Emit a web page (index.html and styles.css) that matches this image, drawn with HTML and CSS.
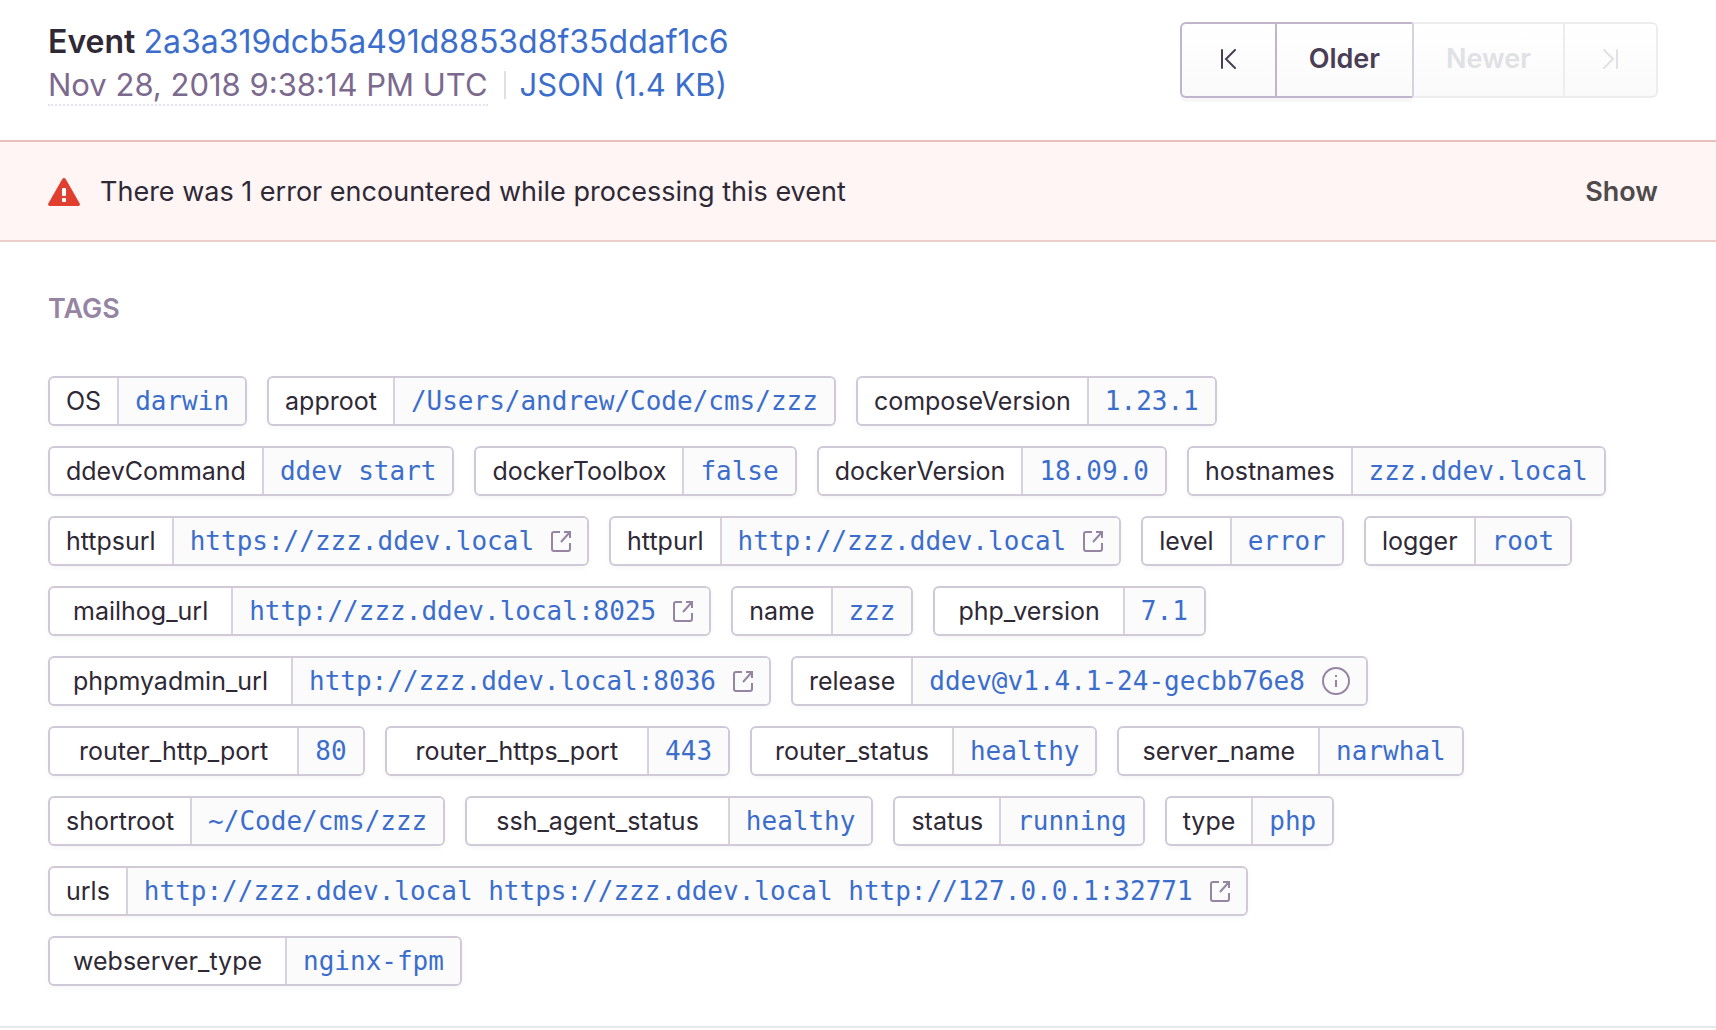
FILE: index.html
```html
<!DOCTYPE html>
<html lang="en">
<head>
<meta charset="utf-8">
<meta name="viewport" content="width=device-width, initial-scale=1">
<title>Event details</title>
<link rel="stylesheet" href="styles.css">
</head>
<body>
<svg class="sprite" aria-hidden="true">
  <symbol id="external" viewBox="0 0 20 22"><path d="M9 2H3a2 2 0 0 0-2 2v15a2 2 0 0 0 2 2h14a2 2 0 0 0 2-2v-6M13 2h6v6M19 2l-9 10" fill="none" stroke="currentColor" stroke-width="2"/></symbol>
  <symbol id="info" viewBox="0 0 28 28"><circle cx="14" cy="14" r="13" fill="none" stroke="currentColor" stroke-width="2"/><path d="M14 13v7M14 8v2" stroke="currentColor" stroke-width="2" fill="none"/></symbol>
</svg>

<header class="event-header">
  <div class="event-info">
    <h1 class="event-title">Event <a href="#event">2a3a319dcb5a491d8853d8f35ddaf1c6</a></h1>
    <div class="event-meta">
      <time class="event-date" datetime="2018-11-28T21:38:14Z">Nov 28, 2018 9:38:14 PM UTC</time>
      <a class="event-json" href="#json">JSON (1.4 KB)</a>
    </div>
  </div>
  <nav class="pager" aria-label="Event navigation">
    <button class="pager-button pager-button--edge" type="button" aria-label="Oldest"><svg width="16" height="20" viewBox="0 0 16 20"><path d="M2 1v18M15 1L6 10l9 9" /></svg></button>
    <button class="pager-button" type="button">Older</button>
    <button class="pager-button" type="button" disabled>Newer</button>
    <button class="pager-button pager-button--edge" type="button" aria-label="Newest" disabled><svg width="16" height="20" viewBox="0 0 16 20"><path d="M14 1v18M1 1l9 9-9 9" /></svg></button>
  </nav>
</header>

<section class="alert">
  <svg class="alert-icon" width="32" height="28" viewBox="0 0 32 28" aria-hidden="true"><path d="M14.300 1a2 2 0 0 1 3.400 0l14 24.500a1.700 1.700 0 0 1-1.500 2.500H1.800a1.700 1.700 0 0 1-1.500-2.500z" fill="#e03e2f"/><rect x="14" y="10" width="4" height="8" rx="1" fill="#fff"/><rect x="14" y="20" width="4" height="4" rx="1" fill="#fff"/></svg>
  <p class="alert-text">There was 1 error encountered while processing this event</p>
  <button class="alert-toggle" type="button">Show</button>
</section>

<main class="tags">
  <h2 class="tags-title">Tags</h2>
  <ul class="tag-list">
    <li class="tag"><span class="tag-key">OS</span><span class="tag-value"><a href="#os">darwin</a></span></li>
    <li class="tag"><span class="tag-key">approot</span><span class="tag-value"><a href="#approot">/Users/andrew/Code/cms/zzz</a></span></li>
    <li class="tag"><span class="tag-key">composeVersion</span><span class="tag-value"><a href="#composeVersion">1.23.1</a></span></li>
    <li class="tag"><span class="tag-key">ddevCommand</span><span class="tag-value"><a href="#ddevCommand">ddev start</a></span></li>
    <li class="tag"><span class="tag-key">dockerToolbox</span><span class="tag-value"><a href="#dockerToolbox">false</a></span></li>
    <li class="tag"><span class="tag-key">dockerVersion</span><span class="tag-value"><a href="#dockerVersion">18.09.0</a></span></li>
    <li class="tag"><span class="tag-key">hostnames</span><span class="tag-value"><a href="#hostnames">zzz.ddev.local</a></span></li>
    <li class="tag"><span class="tag-key">httpsurl</span><span class="tag-value"><a href="#httpsurl">https://zzz.ddev.local</a><a class="tag-icon" href="#open-httpsurl" aria-label="Open link"><svg width="20" height="22"><use href="#external"/></svg></a></span></li>
    <li class="tag"><span class="tag-key">httpurl</span><span class="tag-value"><a href="#httpurl">http://zzz.ddev.local</a><a class="tag-icon" href="#open-httpurl" aria-label="Open link"><svg width="20" height="22"><use href="#external"/></svg></a></span></li>
    <li class="tag"><span class="tag-key">level</span><span class="tag-value"><a href="#level">error</a></span></li>
    <li class="tag"><span class="tag-key">logger</span><span class="tag-value"><a href="#logger">root</a></span></li>
    <li class="tag"><span class="tag-key tag-key--snake">mailhog_url</span><span class="tag-value"><a href="#mailhog_url">http://zzz.ddev.local:8025</a><a class="tag-icon" href="#open-mailhog" aria-label="Open link"><svg width="20" height="22"><use href="#external"/></svg></a></span></li>
    <li class="tag"><span class="tag-key">name</span><span class="tag-value"><a href="#name">zzz</a></span></li>
    <li class="tag"><span class="tag-key tag-key--snake">php_version</span><span class="tag-value"><a href="#php_version">7.1</a></span></li>
    <li class="tag"><span class="tag-key tag-key--snake">phpmyadmin_url</span><span class="tag-value"><a href="#phpmyadmin_url">http://zzz.ddev.local:8036</a><a class="tag-icon" href="#open-phpmyadmin" aria-label="Open link"><svg width="20" height="22"><use href="#external"/></svg></a></span></li>
    <li class="tag"><span class="tag-key">release</span><span class="tag-value"><a href="#release">ddev@v1.4.1-24-gecbb76e8</a><a class="tag-icon" href="#release-info" aria-label="Release details"><svg width="28" height="28"><use href="#info"/></svg></a></span></li>
    <li class="tag"><span class="tag-key tag-key--long-snake">router_http_port</span><span class="tag-value"><a href="#router_http_port">80</a></span></li>
    <li class="tag"><span class="tag-key tag-key--long-snake">router_https_port</span><span class="tag-value"><a href="#router_https_port">443</a></span></li>
    <li class="tag"><span class="tag-key tag-key--snake">router_status</span><span class="tag-value"><a href="#router_status">healthy</a></span></li>
    <li class="tag"><span class="tag-key tag-key--snake">server_name</span><span class="tag-value"><a href="#server_name">narwhal</a></span></li>
    <li class="tag"><span class="tag-key">shortroot</span><span class="tag-value"><a href="#shortroot">~/Code/cms/zzz</a></span></li>
    <li class="tag"><span class="tag-key tag-key--long-snake">ssh_agent_status</span><span class="tag-value"><a href="#ssh_agent_status">healthy</a></span></li>
    <li class="tag"><span class="tag-key">status</span><span class="tag-value"><a href="#status">running</a></span></li>
    <li class="tag"><span class="tag-key">type</span><span class="tag-value"><a href="#type">php</a></span></li>
    <li class="tag"><span class="tag-key">urls</span><span class="tag-value"><a href="#urls">http://zzz.ddev.local https://zzz.ddev.local http://127.0.0.1:32771</a><a class="tag-icon" href="#open-urls" aria-label="Open link"><svg width="20" height="22"><use href="#external"/></svg></a></span></li>
    <li class="tag"><span class="tag-key tag-key--snake">webserver_type</span><span class="tag-value"><a href="#webserver_type">nginx-fpm</a></span></li>
  </ul>
</main>
</body>
</html>
```
FILE: styles.css
```css
* { box-sizing: border-box; }

body {
  margin: 0;
  background: #fff;
  color: #2f2936;
  font: 400 25px/30px Inter, "Liberation Sans", sans-serif;
}

a { color: #3b6ecc; text-decoration: none; }
button { font: inherit; cursor: pointer; }
button:disabled { cursor: default; }
svg { display: block; flex: none; }

.sprite { position: absolute; width: 0; height: 0; }

/* Header */
.event-header {
  display: flex;
  justify-content: space-between;
  align-items: flex-start;
  padding: 22px 58px 34px 48px;
}

.event-title {
  margin: 0 0 2px;
  font-size: 32px;
  line-height: 40px;
  font-weight: 600;
}
.event-title a { font-weight: 400; }

.event-meta {
  display: flex;
  align-items: center;
  gap: 16px;
  font-size: 31px;
  line-height: 38px;
}
.event-date {
  padding-top: 2px;
  color: #7c6a8e;
  border-bottom: 2px dotted #e2e5ed;
}
.event-json {
  display: flex;
  align-items: center;
  gap: 14px;
}
.event-json::before {
  content: "";
  width: 2px;
  height: 28px;
  background: #e2dee6;
}

.pager { display: flex; }
.pager-button {
  display: flex;
  align-items: center;
  justify-content: center;
  height: 76px;
  padding: 0 32px 2px;
  border: 2px solid #c0b5cc;
  border-right-width: 0;
  background: linear-gradient(#fff, #fafafa);
  box-shadow: 0 4px 0 rgba(0, 0, 0, .03);
  color: #493e54;
  font-size: 27px;
  font-weight: 600;
}
.pager-button:disabled {
  border-color: #ededee;
  box-shadow: none;
  color: #e0e1e4;
}
.pager-button--edge { width: 95px; padding: 0 0 2px; }
.pager-button:first-child { border-radius: 6px 0 0 6px; }
.pager-button:last-child { border-right-width: 2px; border-radius: 0 6px 6px 0; }
.pager-button:enabled + .pager-button:disabled { border-left-color: #d8d2de; }
.pager-button svg {
  fill: none;
  stroke: currentColor;
  stroke-width: 2;
  stroke-linecap: round;
}

/* Alert */
.alert {
  display: flex;
  align-items: center;
  gap: 20px;
  padding: 35px 58px 33px 48px;
  border-top: 2px solid #e7c0bc;
  border-bottom: 2px solid #ebcdca;
  background: #fef5f4;
  font-size: 27px;
}
.alert-text { flex: 1; margin: 0; }
.alert-toggle {
  padding: 0;
  border: 0;
  background: none;
  color: #4f4b4b;
  font-weight: 600;
}

/* Tags */
.tags {
  padding: 52px 88px 40px 48px;
  border-bottom: 2px solid #e9e8ec;
}
.tags-title {
  margin: 0 0 52px;
  color: #9585a3;
  font-size: 27px;
  font-weight: 600;
  text-transform: uppercase;
}
.tag-list {
  display: flex;
  flex-wrap: wrap;
  gap: 20px;
  margin: 0;
  padding: 0;
  list-style: none;
}
.tag {
  display: flex;
  height: 50px;
  border: 2px solid #d0c9d7;
  border-radius: 6px;
  box-shadow: 0 2px 4px rgba(0, 0, 0, .04);
}
.tag-key {
  display: flex;
  align-items: center;
  justify-content: center;
  padding: 0 16px;
}
.tag-key--snake { padding: 0 23px; }
.tag-key--long-snake { padding: 0 29px; }
.tag-value {
  display: flex;
  align-items: center;
  gap: 17px;
  padding: 0 16px;
  border-left: 2px solid #d8d2de;
  border-radius: 0 4px 4px 0;
  background: #fbfbfc;
  font-family: "DejaVu Sans Mono", monospace;
  font-size: 26px;
}
.tag-icon { color: #9585a3; }
```
